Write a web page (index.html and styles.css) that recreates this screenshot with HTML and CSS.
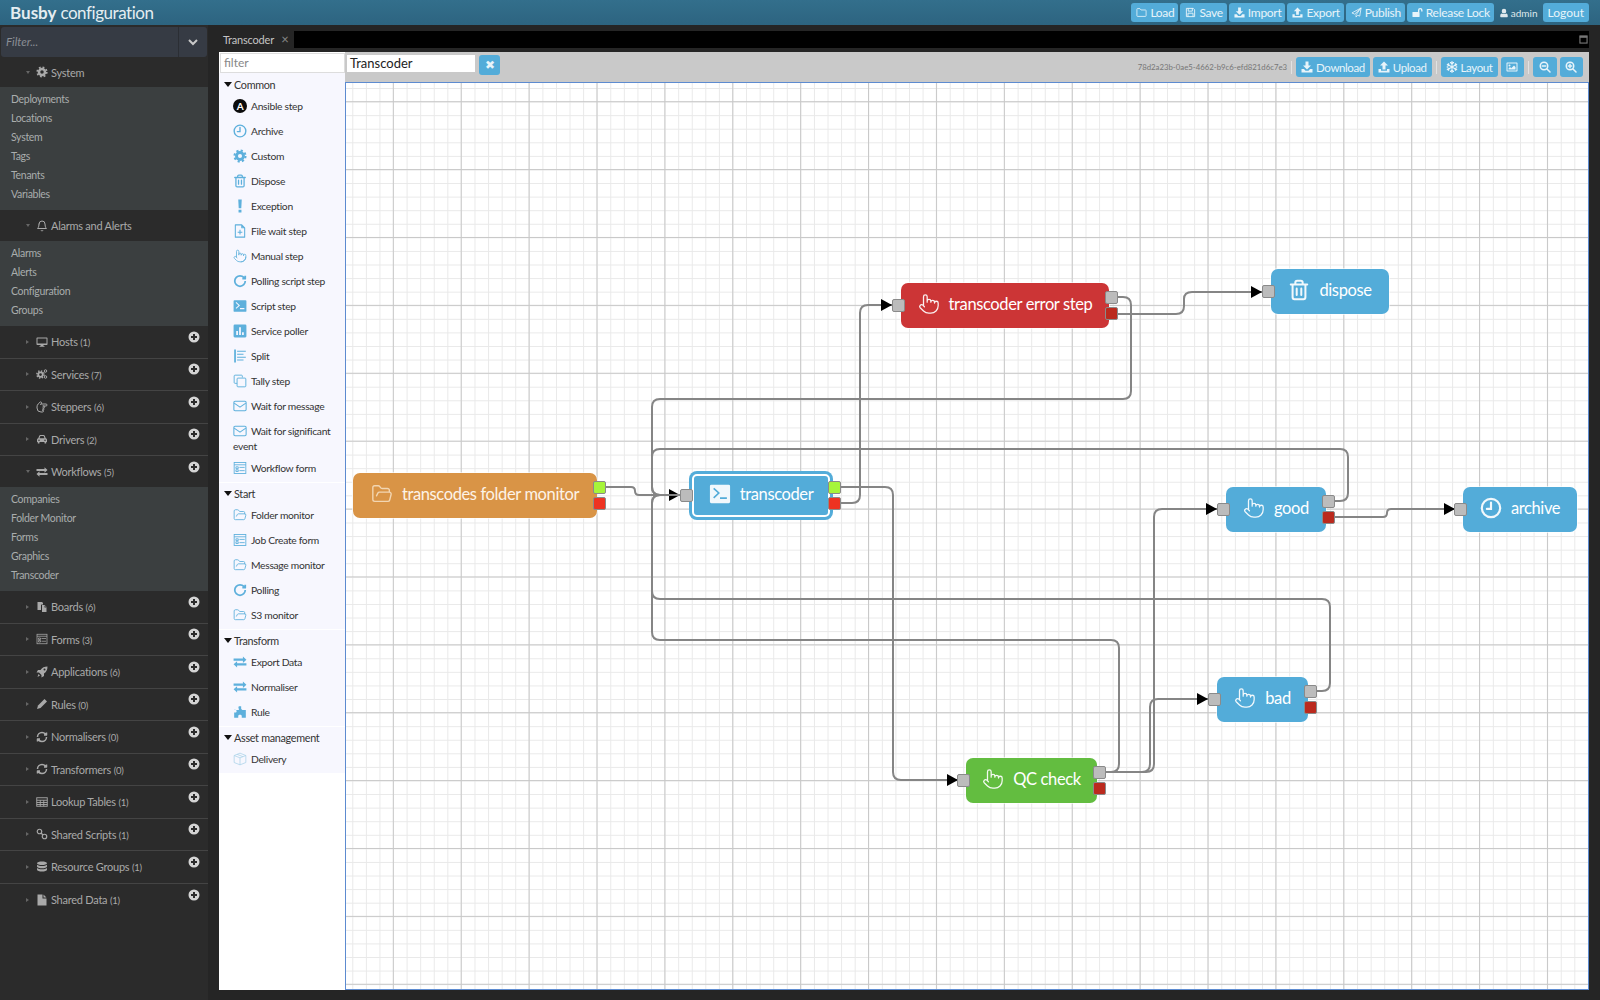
FILE: index.html
```html
<!DOCTYPE html>
<html lang="en">
<head>
<meta charset="utf-8">
<title>Busby configuration</title>
<link rel="stylesheet" href="styles.css">
</head>
<body>
<svg class="defs" aria-hidden="true">
<defs>
<symbol id="hand" viewBox="0 0 24 24" fill="none" stroke="currentColor" stroke-width="1.400" stroke-linecap="round" stroke-linejoin="round"><path d="M22 14a8 8 0 0 1-8 8M18 11v-1a2 2 0 0 0-2-2 2 2 0 0 0-2 2M14 10V9a2 2 0 0 0-2-2 2 2 0 0 0-2 2v1M10 9.500V4a2 2 0 0 0-2-2 2 2 0 0 0-2 2v10M18 11a2 2 0 1 1 4 0v3a8 8 0 0 1-8 8h-2c-2.800 0-4.500-.86-5.990-2.340l-3.600-3.600a2 2 0 0 1 2.830-2.820L7 15"/></symbol>
<symbol id="handr" viewBox="0 0 24 24" fill="none" stroke="currentColor" stroke-width="2" stroke-linecap="round" stroke-linejoin="round"><g transform="rotate(90 12 12)"><path d="M18 11v-1a2 2 0 0 0-2-2 2 2 0 0 0-2 2M14 10V9a2 2 0 0 0-2-2 2 2 0 0 0-2 2v1M10 9.500V4a2 2 0 0 0-2-2 2 2 0 0 0-2 2v10M18 11a2 2 0 1 1 4 0v3a8 8 0 0 1-8 8h-2c-2.800 0-4.500-.86-5.990-2.340l-3.600-3.600a2 2 0 0 1 2.830-2.820L7 15"/></g></symbol>
<symbol id="folderopen" viewBox="0 0 24 24" fill="none" stroke="currentColor" stroke-width="1.500" stroke-linecap="round" stroke-linejoin="round"><path d="m6 14 1.450-2.900A2 2 0 0 1 9.240 10H20a2 2 0 0 1 1.940 2.500l-1.550 6a2 2 0 0 1-1.940 1.500H4a2 2 0 0 1-2-2V5c0-1.100.9-2 2-2h3.930a2 2 0 0 1 1.660.9l.82 1.200a2 2 0 0 0 1.660.9H18a2 2 0 0 1 2 2v2"/></symbol>
<symbol id="folder" viewBox="0 0 24 24" fill="none" stroke="currentColor" stroke-width="1.800" stroke-linejoin="round"><path d="M2 19V5a1.500 1.500 0 0 1 1.500-1.500h5L11 6.500h9.500A1.500 1.500 0 0 1 22 8v11a1.500 1.500 0 0 1-1.500 1.500h-17A1.500 1.500 0 0 1 2 19z"/></symbol>
<symbol id="trash" viewBox="0 0 24 24" fill="none" stroke="currentColor" stroke-width="2.200" stroke-linecap="round" stroke-linejoin="round"><path d="M3 6h18M19 6v14c0 1-1 2-2 2H7c-1 0-2-1-2-2V6M8 6V4c0-1 1-2 2-2h4c1 0 2 1 2 2v2M9.500 10.500v7M14.500 10.500v7"/></symbol>
<symbol id="gear" viewBox="0 0 24 24" fill="none" stroke="currentColor"><circle cx="12" cy="12" r="6" stroke-width="5"/><circle cx="12" cy="12" r="9.500" stroke-width="3.500" stroke-dasharray="3.700 3.760"/></symbol>
<symbol id="cogs" viewBox="0 0 24 24" fill="none" stroke="currentColor"><circle cx="9" cy="13" r="4.500" stroke-width="3.500"/><circle cx="9" cy="13" r="7.200" stroke-width="3" stroke-dasharray="2.800 2.850"/><circle cx="19" cy="6" r="2.500" stroke-width="2"/><circle cx="19" cy="18" r="2.500" stroke-width="2"/></symbol>
<symbol id="bell" viewBox="0 0 24 24" fill="none" stroke="currentColor" stroke-width="2" stroke-linecap="round" stroke-linejoin="round"><path d="M6 8a6 6 0 0 1 12 0c0 7 3 9 3 9H3s3-2 3-9M10.300 21a1.940 1.940 0 0 0 3.400 0"/></symbol>
<symbol id="desktop" viewBox="0 0 24 24"><path fill="currentColor" fill-rule="evenodd" d="M1 4.500A1.500 1.500 0 0 1 2.500 3h19A1.500 1.500 0 0 1 23 4.500v12a1.500 1.500 0 0 1-1.500 1.500H15v2h2v1.500H7V20h2v-2H2.500A1.500 1.500 0 0 1 1 16.500zM3 5v10h18V5z"/></symbol>
<symbol id="car" viewBox="0 0 24 24"><path fill="currentColor" fill-rule="evenodd" d="M4.500 10.500 6.500 5.500A2.500 2.500 0 0 1 8.800 4h6.400a2.500 2.500 0 0 1 2.300 1.500l2 5A3 3 0 0 1 22 13.500V18h-1.500v2a1 1 0 0 1-1 1H18a1 1 0 0 1-1-1v-2H7v2a1 1 0 0 1-1 1H4.500a1 1 0 0 1-1-1v-2H2v-4.500a3 3 0 0 1 2.500-3zM7 10.500h10l-1.400-3.800a1 1 0 0 0-.9-.7H9.300a1 1 0 0 0-.9.700zM6 13a1.500 1.500 0 1 0 0 3 1.500 1.500 0 0 0 0-3zm12 0a1.500 1.500 0 1 0 0 3 1.500 1.500 0 0 0 0-3z"/></symbol>
<symbol id="exchange" viewBox="0 0 24 24"><path fill="currentColor" d="M1 6h16V2.500L23 8l-6 5.500V10H1zM23 14H7v-3.500L1 16l6 5.500V18h16z"/></symbol>
<symbol id="files" viewBox="0 0 24 24"><path fill="currentColor" fill-rule="evenodd" d="M3 2h9l2 2v3h-3l-1 1v10H3zM12 8h5l4 4v10H12zM17 9v4h4z"/></symbol>
<symbol id="form" viewBox="0 0 24 24" fill="none" stroke="currentColor" stroke-width="1.500"><rect x="2" y="2.500" width="20" height="19"/><path d="M2 6.500h20M5 10h4v3H5zM11 11h9M5 15h4v3H5zM11 16.500h9"/></symbol>
<symbol id="rocket" viewBox="0 0 24 24"><path fill="currentColor" d="M23 1c-6 0-11 2-14 7H4l-3 5h5l5 5v5l5-3v-5c5-3 7-8 7-14zM17 5a2 2 0 1 1 0 4 2 2 0 0 1 0-4zM5 16l3 3-5 3z"/></symbol>
<symbol id="pencil" viewBox="0 0 24 24"><path fill="currentColor" d="M17 2l5 5-13 13-7 2 2-7z"/></symbol>
<symbol id="refresh" viewBox="0 0 24 24" fill="none" stroke="currentColor" stroke-width="3" stroke-linejoin="round"><path d="M3 12a9 9 0 0 1 9-9 9.750 9.750 0 0 1 6.740 2.740L21 8M21 3v5h-5M21 12a9 9 0 0 1-9 9 9.750 9.750 0 0 1-6.740-2.740L3 16M8 16H3v5"/></symbol>
<symbol id="table" viewBox="0 0 24 24" fill="none" stroke="currentColor" stroke-width="1.800"><rect x="1.500" y="3.500" width="21" height="17"/><path d="M1.500 8.500h21M1.500 13h21M1.500 17h21M8.500 8.500v12M15.500 8.500v12"/></symbol>
<symbol id="link" viewBox="0 0 24 24" fill="none" stroke="currentColor" stroke-width="2.400"><circle cx="7" cy="7" r="4.500"/><circle cx="17" cy="17" r="4.500"/><path d="M10 10l4 4"/></symbol>
<symbol id="database" viewBox="0 0 24 24"><path fill="currentColor" d="M12 1c5 0 10 1.200 10 3.500S17 8 12 8 2 6.800 2 4.500 7 1 12 1zM2 7.500c2 2 6 2.500 10 2.500s8-.5 10-2.500V11c0 2.300-5 3.500-10 3.500S2 13.300 2 11zM2 14c2 2 6 2.500 10 2.500s8-.5 10-2.500v3.500c0 2.300-5 3.500-10 3.500S2 19.800 2 17.500z"/></symbol>
<symbol id="file" viewBox="0 0 24 24"><path fill="currentColor" d="M3 1h10v8h8v14H3zM15 1l6 6h-6z"/></symbol>
<symbol id="clock" viewBox="0 0 24 24" fill="none" stroke="currentColor" stroke-width="2.400" stroke-linecap="round"><circle cx="12" cy="12" r="10"/><path d="M12 6v7H7.500"/></symbol>
<symbol id="excl" viewBox="0 0 24 24"><path fill="currentColor" d="M9 1h6l-.8 15H9.800zM9.500 18.500h5v4.500h-5z"/></symbol>
<symbol id="fileplus" viewBox="0 0 24 24" fill="none" stroke="currentColor" stroke-width="1.800" stroke-linejoin="round"><path d="M4 1.500h11l5 5v16H4zM15 1.500v5h5M12 10v8M8 14h8"/></symbol>
<symbol id="redo" viewBox="0 0 24 24" fill="none" stroke="currentColor" stroke-width="3" stroke-linejoin="round"><path d="M21 12a9 9 0 1 1-9-9c2.520 0 4.930 1 6.740 2.740L21 8M21 3v5h-5"/></symbol>
<symbol id="terminal" viewBox="0 0 24 24"><path fill="currentColor" fill-rule="evenodd" d="M2.500 2h19A1.500 1.500 0 0 1 23 3.500v17a1.500 1.500 0 0 1-1.500 1.500h-19A1.500 1.500 0 0 1 1 20.500v-17A1.500 1.500 0 0 1 2.500 2zM4.500 6.500 9.500 11l-5 4.500 1.200 1.300L12 11 5.700 5.200zM12 15.500V17.500h7.500v-2z"/></symbol>
<symbol id="chart" viewBox="0 0 24 24"><path fill="currentColor" fill-rule="evenodd" d="M3 1h18a2 2 0 0 1 2 2v18a2 2 0 0 1-2 2H3a2 2 0 0 1-2-2V3a2 2 0 0 1 2-2zM5.500 12v7h3v-7zM10.500 5.500V19h3V5.500zM15.500 14v5h3v-5z"/></symbol>
<symbol id="split" viewBox="0 0 24 24" fill="none" stroke="currentColor" stroke-width="1.800"><path stroke-width="3" d="M3.500 1v22"/><path d="M7 4h15M7 9h11M7 14h15M7 19h11"/></symbol>
<symbol id="copies" viewBox="0 0 24 24" fill="none" stroke="currentColor" stroke-width="1.600" stroke-linejoin="round"><path d="M16 6V3.500A1.500 1.500 0 0 0 14.500 2h-11A1.500 1.500 0 0 0 2 3.500v11A1.500 1.500 0 0 0 3.500 16H7"/><rect x="7" y="7" width="15" height="15" rx="1.500"/></symbol>
<symbol id="mail" viewBox="0 0 24 24" fill="none" stroke="currentColor" stroke-width="1.800" stroke-linejoin="round"><rect x="1.500" y="4" width="21" height="16" rx="2"/><path d="m2 7 10 7 10-7"/></symbol>
<symbol id="puzzle" viewBox="0 0 24 24"><path fill="currentColor" d="M10 2h4v4.500c0 1 2 1 2 1h-1v1h7V22h-7v-3c0-3-6-3-6 0v3H2V13h2c3 0 3-5 0-5H2V8.500h8V6.500c-1-1-1-3 0-4.500z"/></symbol>
<symbol id="cube" viewBox="0 0 24 24" fill="none" stroke="currentColor" stroke-width="1.300" stroke-linejoin="round"><path d="M12 2 2 6v12l10 4 10-4V6zM2 6l10 4 10-4M12 10v12M7 4l10 4"/></symbol>
<symbol id="save" viewBox="0 0 24 24" fill="none" stroke="currentColor" stroke-width="2" stroke-linejoin="round"><path d="M3 3h15l3 3v15H3zM7 3v6h9V3M6.500 21v-7.500h11V21"/></symbol>
<symbol id="download" viewBox="0 0 24 24"><path fill="currentColor" d="M9 1h6v8h5l-8 8-8-8h5zM1 16h5l3 3.500h6l3-3.500h5v7H1z"/></symbol>
<symbol id="upload" viewBox="0 0 24 24"><path fill="currentColor" d="M12 1l8 8h-5v8H9V9H4zM1 16h5v3.500h12V16h5v7H1z"/></symbol>
<symbol id="plane" viewBox="0 0 24 24" fill="none" stroke="currentColor" stroke-width="1.800" stroke-linejoin="round"><path d="M22 2 2 13l6 2.500L22 2 11 17v5l3.500-4 4.500 2z"/></symbol>
<symbol id="unlock" viewBox="0 0 24 24"><path fill="currentColor" fill-rule="evenodd" d="M1 11h14a1.500 1.500 0 0 1 1.500 1.500v8A1.500 1.500 0 0 1 15 22H2.500A1.500 1.500 0 0 1 1 20.500zM13 11V7a5 5 0 0 1 10 0v3h-3V7a2 2 0 0 0-4 0v4z"/></symbol>
<symbol id="user" viewBox="0 0 24 24"><path fill="currentColor" d="M12 2a5.500 5.500 0 1 1 0 11 5.500 5.500 0 0 1 0-11zM7 13c3 2 7 2 10 0 3 0 4 3 4 6v1.500a1.500 1.500 0 0 1-1.500 1.500h-15A1.500 1.500 0 0 1 3 20.500V19c0-3 1-6 4-6z"/></symbol>
<symbol id="snow" viewBox="0 0 24 24" fill="none" stroke="currentColor" stroke-width="2.200" stroke-linecap="round"><path d="M12 1v22M2.500 6.500l19 11M21.500 6.500l-19 11M9 3l3 3 3-3M9 21l3-3 3 3M2.500 10.500 6 9 5.300 5M21.500 13.500 18 15l.7 4M21.500 10.500 18 9l.7-4M2.500 13.500 6 15l-.7 4"/></symbol>
<symbol id="image" viewBox="0 0 24 24"><path fill="currentColor" fill-rule="evenodd" d="M2.500 3h19A1.500 1.500 0 0 1 23 4.500v15a1.500 1.500 0 0 1-1.500 1.500h-19A1.500 1.500 0 0 1 1 19.500v-15A1.500 1.500 0 0 1 2.500 3zM3 5v14h18V5zM7 7a2 2 0 1 1 0 4 2 2 0 0 1 0-4zM5 17v-2l3-3 2.500 2.500L16 9l3 3v5z"/></symbol>
<symbol id="zoomout" viewBox="0 0 24 24" fill="none" stroke="currentColor" stroke-width="3" stroke-linecap="round"><circle cx="10" cy="10" r="7.500"/><path d="m16 16 6 6M6.500 10h7"/></symbol>
<symbol id="zoomin" viewBox="0 0 24 24" fill="none" stroke="currentColor" stroke-width="3" stroke-linecap="round"><circle cx="10" cy="10" r="7.500"/><path d="m16 16 6 6M6.500 10h7M10 6.500v7"/></symbol>
<symbol id="plus" viewBox="0 0 24 24"><path fill="currentColor" fill-rule="evenodd" d="M12 1a11 11 0 1 1 0 22 11 11 0 0 1 0-22zM10 6v4H6v4h4v4h4v-4h4v-4h-4V6z"/></symbol>
<symbol id="chev" viewBox="0 0 24 24" fill="none" stroke="currentColor" stroke-width="4"><path d="m4 8 8 8 8-8"/></symbol>
<symbol id="box" viewBox="0 0 24 24" fill="none" stroke="currentColor" stroke-width="3"><rect x="2.500" y="2.500" width="19" height="19"/><path stroke-width="5" d="M2 5h20"/></symbol>
</defs>
</svg>

<header class="topbar">
  <h1 class="brand"><b>Busby</b> configuration</h1>
  <nav class="actions">
    <a class="btn"><svg class="ic"><use href="#folder"/></svg>Load</a>
    <a class="btn"><svg class="ic"><use href="#save"/></svg>Save</a>
    <a class="btn"><svg class="ic"><use href="#download"/></svg>Import</a>
    <a class="btn"><svg class="ic"><use href="#upload"/></svg>Export</a>
    <a class="btn"><svg class="ic"><use href="#plane"/></svg>Publish</a>
    <a class="btn"><svg class="ic"><use href="#unlock"/></svg>Release Lock</a>
    <span class="who"><svg class="ic"><use href="#user"/></svg>admin</span>
    <a class="btn logout">Logout</a>
  </nav>
</header>

<div class="main">
  <aside class="sidebar">
    <div class="sfilter"><span class="sfilter-text">Filter...</span><span class="sfilter-btn"><svg class="chev"><use href="#chev"/></svg></span></div>

    <div class="row open first"><i class="caret down"></i><svg class="ic"><use href="#gear"/></svg><span class="lab">System</span></div>
    <ul class="sub"><li>Deployments</li><li>Locations</li><li>System</li><li>Tags</li><li>Tenants</li><li>Variables</li></ul>

    <div class="row open"><i class="caret down"></i><svg class="ic"><use href="#bell"/></svg><span class="lab">Alarms and Alerts</span></div>
    <ul class="sub"><li>Alarms</li><li>Alerts</li><li>Configuration</li><li>Groups</li></ul>

    <div class="row"><i class="caret"></i><svg class="ic"><use href="#desktop"/></svg><span class="lab">Hosts <small>(1)</small></span><svg class="add"><use href="#plus"/></svg></div>
    <div class="row"><i class="caret"></i><svg class="ic"><use href="#cogs"/></svg><span class="lab">Services <small>(7)</small></span><svg class="add"><use href="#plus"/></svg></div>
    <div class="row"><i class="caret"></i><svg class="ic"><use href="#handr"/></svg><span class="lab">Steppers <small>(6)</small></span><svg class="add"><use href="#plus"/></svg></div>
    <div class="row"><i class="caret"></i><svg class="ic"><use href="#car"/></svg><span class="lab">Drivers <small>(2)</small></span><svg class="add"><use href="#plus"/></svg></div>
    <div class="row open"><i class="caret down"></i><svg class="ic"><use href="#exchange"/></svg><span class="lab">Workflows <small>(5)</small></span><svg class="add"><use href="#plus"/></svg></div>
    <ul class="sub"><li>Companies</li><li>Folder Monitor</li><li>Forms</li><li>Graphics</li><li>Transcoder</li></ul>

    <div class="row"><i class="caret"></i><svg class="ic"><use href="#files"/></svg><span class="lab">Boards <small>(6)</small></span><svg class="add"><use href="#plus"/></svg></div>
    <div class="row"><i class="caret"></i><svg class="ic"><use href="#form"/></svg><span class="lab">Forms <small>(3)</small></span><svg class="add"><use href="#plus"/></svg></div>
    <div class="row"><i class="caret"></i><svg class="ic"><use href="#rocket"/></svg><span class="lab">Applications <small>(6)</small></span><svg class="add"><use href="#plus"/></svg></div>
    <div class="row"><i class="caret"></i><svg class="ic"><use href="#pencil"/></svg><span class="lab">Rules <small>(0)</small></span><svg class="add"><use href="#plus"/></svg></div>
    <div class="row"><i class="caret"></i><svg class="ic"><use href="#refresh"/></svg><span class="lab">Normalisers <small>(0)</small></span><svg class="add"><use href="#plus"/></svg></div>
    <div class="row"><i class="caret"></i><svg class="ic"><use href="#refresh"/></svg><span class="lab">Transformers <small>(0)</small></span><svg class="add"><use href="#plus"/></svg></div>
    <div class="row"><i class="caret"></i><svg class="ic"><use href="#table"/></svg><span class="lab">Lookup Tables <small>(1)</small></span><svg class="add"><use href="#plus"/></svg></div>
    <div class="row"><i class="caret"></i><svg class="ic"><use href="#link"/></svg><span class="lab">Shared Scripts <small>(1)</small></span><svg class="add"><use href="#plus"/></svg></div>
    <div class="row"><i class="caret"></i><svg class="ic"><use href="#database"/></svg><span class="lab">Resource Groups <small>(1)</small></span><svg class="add"><use href="#plus"/></svg></div>
    <div class="row last"><i class="caret"></i><svg class="ic"><use href="#file"/></svg><span class="lab">Shared Data <small>(1)</small></span><svg class="add"><use href="#plus"/></svg></div>
  </aside>

  <section class="workspace">
    <div class="tabbar">
      <div class="tab">Transcoder <span class="tab-x">×</span></div>
      <svg class="maxi"><use href="#box"/></svg>
    </div>
    <div class="panel">
      <div class="palette">
        <div class="pfilter">filter</div>
        <div class="psec">
          <div class="phead"><i class="tri"></i>Common</div>
          <div class="pitem"><span class="ansible">A</span>Ansible step</div>
          <div class="pitem"><svg class="pic"><use href="#clock"/></svg>Archive</div>
          <div class="pitem"><svg class="pic"><use href="#gear"/></svg>Custom</div>
          <div class="pitem"><svg class="pic"><use href="#trash"/></svg>Dispose</div>
          <div class="pitem"><svg class="pic"><use href="#excl"/></svg>Exception</div>
          <div class="pitem"><svg class="pic"><use href="#fileplus"/></svg>File wait step</div>
          <div class="pitem"><svg class="pic"><use href="#hand"/></svg>Manual step</div>
          <div class="pitem"><svg class="pic"><use href="#redo"/></svg>Polling script step</div>
          <div class="pitem"><svg class="pic"><use href="#terminal"/></svg>Script step</div>
          <div class="pitem"><svg class="pic"><use href="#chart"/></svg>Service poller</div>
          <div class="pitem"><svg class="pic"><use href="#split"/></svg>Split</div>
          <div class="pitem"><svg class="pic"><use href="#copies"/></svg>Tally step</div>
          <div class="pitem"><svg class="pic"><use href="#mail"/></svg>Wait for message</div>
          <div class="pitem two"><svg class="pic"><use href="#mail"/></svg>Wait for significant event</div>
          <div class="pitem"><svg class="pic"><use href="#form"/></svg>Workflow form</div>
        </div>
        <div class="psec">
          <div class="phead"><i class="tri"></i>Start</div>
          <div class="pitem"><svg class="pic"><use href="#folderopen"/></svg>Folder monitor</div>
          <div class="pitem"><svg class="pic"><use href="#form"/></svg>Job Create form</div>
          <div class="pitem"><svg class="pic"><use href="#folderopen"/></svg>Message monitor</div>
          <div class="pitem"><svg class="pic"><use href="#redo"/></svg>Polling</div>
          <div class="pitem"><svg class="pic"><use href="#folderopen"/></svg>S3 monitor</div>
        </div>
        <div class="psec">
          <div class="phead"><i class="tri"></i>Transform</div>
          <div class="pitem"><svg class="pic"><use href="#exchange"/></svg>Export Data</div>
          <div class="pitem"><svg class="pic"><use href="#exchange"/></svg>Normaliser</div>
          <div class="pitem"><svg class="pic"><use href="#puzzle"/></svg>Rule</div>
        </div>
        <div class="psec">
          <div class="phead"><i class="tri"></i>Asset management</div>
          <div class="pitem"><svg class="pic pale"><use href="#cube"/></svg>Delivery</div>
        </div>
      </div>

      <div class="editor">
        <div class="toolbar">
          <div class="tname">Transcoder</div>
          <a class="btn tx">✖</a>
          <span class="uuid">78d2a23b-0ae5-4662-b9c6-efd821d6c7e3</span>
          <span class="sep"></span>
          <a class="btn"><svg class="ic"><use href="#download"/></svg>Download</a>
          <a class="btn"><svg class="ic"><use href="#upload"/></svg>Upload</a>
          <span class="sep"></span>
          <a class="btn"><svg class="ic"><use href="#snow"/></svg>Layout</a>
          <a class="btn only"><svg class="ic"><use href="#image"/></svg></a>
          <span class="sep"></span>
          <a class="btn only"><svg class="ic"><use href="#zoomout"/></svg></a>
          <a class="btn only"><svg class="ic"><use href="#zoomin"/></svg></a>
        </div>
        <div class="canvas">
          <svg class="edges" viewBox="345 82 1244 908">
            <defs>
              <marker id="ah" markerUnits="userSpaceOnUse" markerWidth="11" markerHeight="12" refX="11" refY="6" orient="auto"><path d="M0 0 11 6 0 12z" fill="#000"/></marker>
            </defs>
            <g class="wire">
              <path d="M604 487H631Q635 487 635 491T639 495H680" marker-end="url(#ah)"/>
              <path d="M841 487H885Q893 487 893 495V772Q893 780 901 780H958" marker-end="url(#ah)"/>
              <path d="M841 503H852Q860 503 860 495V313Q860 305 868 305H892" marker-end="url(#ah)"/>
              <path d="M1117 297H1123Q1131 297 1131 305V391Q1131 399 1123 399H660Q652 399 652 407V487Q652 495 660 495H680"/>
              <path d="M1335 501H1340Q1348 501 1348 493V457Q1348 449 1340 449H660Q652 449 652 457V487Q652 495 660 495H680"/>
              <path d="M1105 772H1111Q1119 772 1119 764V648Q1119 640 1111 640H660Q652 640 652 632V503Q652 495 660 495H680"/>
              <path d="M1316 691H1322Q1330 691 1330 683V607Q1330 599 1322 599H660Q652 599 652 591V503Q652 495 660 495H680"/>
              <path d="M1117 314H1176Q1184 314 1184 306V299Q1184 292 1192 292H1262" marker-end="url(#ah)"/>
              <path d="M1335 517H1383Q1387 517 1387 513T1391 509H1455" marker-end="url(#ah)"/>
              <path d="M1105 772H1146Q1154 772 1154 764V517Q1154 509 1162 509H1217" marker-end="url(#ah)"/>
              <path d="M1105 772H1142Q1150 772 1150 764V707Q1150 699 1158 699H1208" marker-end="url(#ah)"/>
            </g>
          </svg>

          <div class="node orange n-folder"><svg class="nic"><use href="#folderopen"/></svg><span>transcodes folder monitor</span><i class="port out ok"></i><i class="port err bright"></i></div>
          <div class="node blue selected n-transcoder"><i class="port in"></i><svg class="nic"><use href="#terminal"/></svg><span>transcoder</span><i class="port out ok"></i><i class="port err bright"></i></div>
          <div class="node red n-error"><i class="port in"></i><svg class="nic"><use href="#hand"/></svg><span>transcoder error step</span><i class="port out"></i><i class="port err"></i></div>
          <div class="node blue n-dispose"><i class="port in"></i><svg class="nic"><use href="#trash"/></svg><span>dispose</span></div>
          <div class="node blue n-good"><i class="port in"></i><svg class="nic"><use href="#hand"/></svg><span>good</span><i class="port out"></i><i class="port err"></i></div>
          <div class="node blue n-archive"><i class="port in"></i><svg class="nic"><use href="#clock"/></svg><span>archive</span></div>
          <div class="node green n-qc"><i class="port in"></i><svg class="nic"><use href="#hand"/></svg><span>QC check</span><i class="port out"></i><i class="port err"></i></div>
          <div class="node blue n-bad"><i class="port in"></i><svg class="nic"><use href="#hand"/></svg><span>bad</span><i class="port out"></i><i class="port err"></i></div>
        </div>
      </div>
    </div>
  </section>
</div>
</body>
</html>
```

FILE: styles.css
```css
* { box-sizing: border-box; }
html, body { margin: 0; height: 100%; }
body {
  width: 1600px;
  height: 1000px;
  overflow: hidden;
  background: #252525;
  font-family: Lato, "Open Sans", sans-serif;
  display: flex;
  flex-direction: column;
}
.defs { position: absolute; width: 0; height: 0; }
ul { list-style: none; margin: 0; padding: 0; }
h1 { margin: 0; }

/* top bar */
.topbar {
  height: 25px;
  flex: none;
  display: flex;
  align-items: center;
  justify-content: space-between;
  padding: 0 11px 0 10px;
  background: linear-gradient(#336f8c, #2d6480);
}
.brand { font-size: 17px; font-weight: 400; color: #e4edf1; line-height: 25px; letter-spacing: -.45px; }
.brand b { font-weight: 700; letter-spacing: 0; }
.actions { display: flex; align-items: center; gap: 2px; }
.btn {
  display: flex;
  align-items: center;
  height: 19px;
  padding: 0 4px 0 5px;
  gap: 3px;
  border-radius: 3px;
  background: #53acd9;
  color: #e8f4fa;
  font-size: 12px;
  letter-spacing: -.3px;
}
.ic { width: 12px; height: 12px; flex: none; }
.btn .ic { width: 11px; height: 11px; }
.who { display: flex; align-items: center; gap: 2px; margin: 0 1px 0 3px; font-size: 10px; color: #dfe8ec; }
.who .ic { width: 10px; height: 10px; }
.logout { margin-left: 2px; padding: 0 5px; letter-spacing: 0; }

/* main */
.main { flex: 1; display: flex; min-height: 0; }

/* sidebar */
.sidebar { width: 208px; flex: none; background: #2b2b2b; color: #a9a9a9; }
.sfilter { display: flex; height: 30px; margin: 2px 1px 0; border-radius: 3px; background: #363b44; }
.sfilter-text { flex: 1; padding-left: 5px; line-height: 30px; font-size: 11.500px; font-style: italic; color: #8b8f96; }
.sfilter-btn { width: 29px; display: flex; align-items: center; justify-content: center; border-left: 1px solid #2b2e34; color: #c8c8c8; }
.chev { width: 12px; height: 12px; }
.row {
  height: 32.500px;
  display: flex;
  align-items: center;
  padding: 0 8px 0 26px;
  border-bottom: 1px solid #444;
  font-size: 11px;
  letter-spacing: -.25px;
}
.row.open { height: 31px; border-bottom: 0; }
.row.first { height: 30px; }
.row.last { border-bottom: 0; }
.caret { width: 0; height: 0; margin-right: 7px; border-left: 3px solid #666; border-top: 2.500px solid transparent; border-bottom: 2.500px solid transparent; }
.caret.down { border-left: 2.500px solid transparent; border-right: 2.500px solid transparent; border-top: 3px solid #666; border-bottom: 0; margin-right: 6px; }
.lab { margin-left: 3px; white-space: nowrap; }
.lab small { font-size: 9.500px; }
.add { width: 12px; height: 12px; margin-left: auto; transform: translateY(-5px); color: #d4d4d4; }
.sub { padding: 3px 0 6px 11px; background: #3b3f40; font-size: 10.500px; letter-spacing: -.3px; color: #a9adad; }
.sub li { height: 19px; line-height: 19px; }

/* workspace */
.workspace { flex: 1; display: flex; flex-direction: column; padding: 6px 11px 10px 7px; min-width: 0; }
.tabbar { height: 17px; flex: none; display: flex; justify-content: space-between; align-items: center; background: #000; margin-bottom: 4px; }
.tab { height: 18px; margin-top: 1px; width: 79px; padding-left: 8px; line-height: 16px; background: #252525; color: #c4c4c4; font-size: 11px; letter-spacing: -.2px; }
.tab-x { margin-left: 5px; font-size: 13px; color: #888; }
.maxi { width: 9px; height: 9px; margin-right: 1px; color: #777; }
.panel { flex: 1; display: flex; min-height: 0; padding-left: 4px; }

/* palette */
.palette { width: 126px; flex: none; background: #fff; color: #333; font-size: 10.300px; letter-spacing: -.3px; }
.pfilter { height: 20px; margin: 1px 0 0 1px; padding-left: 3px; line-height: 18px; font-size: 12px; letter-spacing: 0; color: #888; background: #fff; border: 1px solid #ddd; }
.psec { background: #f7f7fe; margin-bottom: 1px; padding-top: 1px; }
.phead { height: 20px; display: flex; align-items: center; padding-left: 5px; font-size: 10.800px; }
.tri { width: 0; height: 0; margin-right: 2px; border-left: 4px solid transparent; border-right: 4px solid transparent; border-top: 5px solid #111; }
.pitem { height: 25px; padding: 4.800px 4px 0 14px; line-height: 15.500px; }
.pitem.two { height: 37.500px; }
.pic { width: 14px; height: 14px; margin-right: 4px; vertical-align: -3px; color: #5eb0dc; }
.pic.pale { color: #a9d2e8; }
.ansible { display: inline-block; width: 14px; height: 14px; margin-right: 4px; border-radius: 50%; background: #0c0c0c; color: #fff; font-size: 10px; font-weight: 700; line-height: 14px; text-align: center; vertical-align: top; }

/* editor */
.editor { flex: 1; display: flex; flex-direction: column; min-width: 0; }
.toolbar { height: 30px; flex: none; display: flex; align-items: center; gap: 3px; padding: 0 6px 0 2px; background: #c9c9c9; }
.tname { width: 128px; height: 17px; align-self: flex-start; margin: 3px 1px 0 0; padding-left: 3px; line-height: 17px; background: #fff; font-size: 13px; color: #222; }
.toolbar .tx { width: 21px; height: 19px; align-self: flex-start; margin-top: 3px; justify-content: center; padding: 0; font-size: 10px; }
.uuid { margin-left: auto; font-size: 7.800px; color: #777; }
.sep { width: 1px; height: 13px; background: #e2e2e2; margin: 0 1px; }
.btn.only { width: 23.500px; padding: 0; justify-content: center; }
.toolbar .btn { height: 20px; padding: 0 5px; gap: 3px; font-size: 11.500px; letter-spacing: -.4px; }
.toolbar .btn .ic { width: 12px; height: 12px; }
.toolbar .btn.only { padding: 0; }

/* canvas */
.canvas {
  position: relative;
  flex: 1;
  border: 1px solid #5d8bd0;
  background-color: #fff;
  background-image:
    linear-gradient(#c8c8c8 1px, transparent 1px),
    linear-gradient(90deg, #c8c8c8 1px, transparent 1px),
    linear-gradient(#e9e9e9 1px, transparent 1px),
    linear-gradient(90deg, #e9e9e9 1px, transparent 1px);
  background-size: 67.900px 67.900px, 67.900px 67.900px, 13.580px 13.580px, 13.580px 13.580px;
  background-position: 0 18.200px, 46.800px 0, 0 5px, 6.300px 0;
}
.edges { position: absolute; left: -1px; top: -1px; width: 1244px; height: 908px; }
.wire path { fill: none; stroke: #858585; stroke-width: 2; }

/* nodes */
.node {
  position: absolute;
  display: flex;
  align-items: center;
  justify-content: center;
  gap: 9px;
  padding-bottom: 4px;
  border-radius: 7px;
  color: #fff;
  font-size: 16.500px;
  letter-spacing: -.38px;
  height: 45px;
  white-space: nowrap;
  box-shadow: 0 0 0 1px rgba(255,255,255,.6);
}
.nic { width: 22px; height: 22px; flex: none; opacity: .92; }
.orange { background: #d99446; }
.blue { background: #53acd9; }
.red { background: #cc3536; }
.green { background: #63bd40; }
.selected { border: 2px solid #fff; box-shadow: 0 0 0 3px #53acd9; border-radius: 5px; height: 43px; }
.orange span { color: #fdf3e6; }
.orange .nic { color: #f5dcbc; }
.port { position: absolute; width: 13px; height: 13px; border: 1.500px solid #8a8a8a; border-radius: 2px; background: #bcbcbc; }
.port.in { left: -9px; top: 16px; }
.port.out { right: -8.500px; top: 8px; }
.port.err { right: -8.500px; top: 24px; background: #bb2a1e; }
.port.err.bright { background: #ee3322; }
.port.ok { background: #a6f53a; }
.selected .port.in { left: -14px; top: 13px; }
.selected .port.out { right: -13px; top: 5px; }
.selected .port.err { right: -13px; top: 21px; }

.n-folder { left: 7px; top: 390px; width: 244px; }
.n-transcoder { left: 346px; top: 391px; width: 138px; }
.n-error { left: 555px; top: 200px; width: 208px; }
.n-dispose { left: 925px; top: 186px; width: 118px; }
.n-good { left: 880px; top: 404px; width: 100px; }
.n-archive { left: 1117px; top: 404px; width: 114px; }
.n-qc { left: 620px; top: 675px; width: 131px; }
.n-bad { left: 871px; top: 594px; width: 91px; }
```
